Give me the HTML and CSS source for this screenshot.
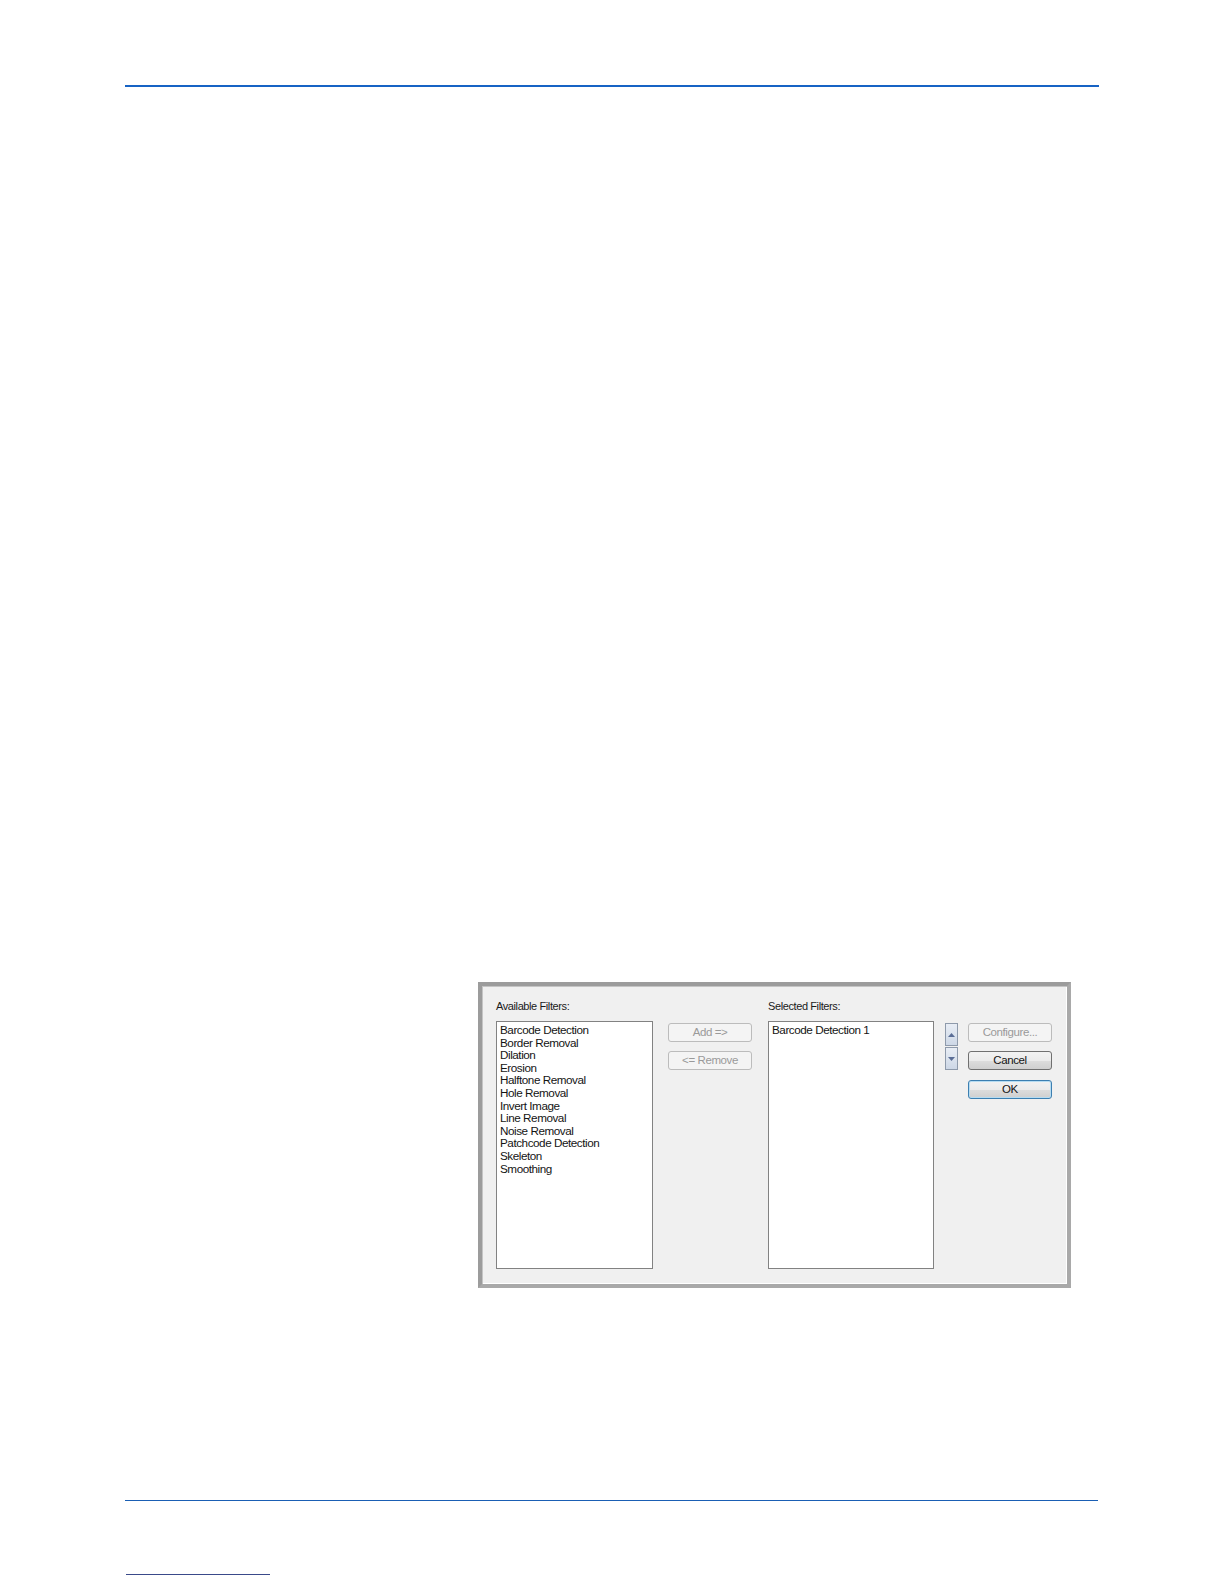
FILE: index.html
```html
<!DOCTYPE html>
<html>
<head>
<meta charset="utf-8">
<link rel="stylesheet" href="styles.css">
</head>
<body>
<div class="page">
  <div class="rule-top"></div>
  <div class="figure">
    <div class="dialog">
      <div class="label lbl-avail">Available Filters:</div>
      <div class="label lbl-sel">Selected Filters:</div>
      <div class="listbox list-avail">
        <div class="item">Barcode Detection</div>
        <div class="item">Border Removal</div>
        <div class="item">Dilation</div>
        <div class="item">Erosion</div>
        <div class="item">Halftone Removal</div>
        <div class="item">Hole Removal</div>
        <div class="item">Invert Image</div>
        <div class="item">Line Removal</div>
        <div class="item">Noise Removal</div>
        <div class="item">Patchcode Detection</div>
        <div class="item">Skeleton</div>
        <div class="item">Smoothing</div>
      </div>
      <div class="btncol mid">
        <div class="btn disabled">Add =&gt;</div>
        <div class="btn disabled">&lt;= Remove</div>
      </div>
      <div class="listbox list-sel">
        <div class="item">Barcode Detection 1</div>
      </div>
      <div class="updown">
        <div class="arrow up"><svg width="7" height="4" viewBox="0 0 7 4"><path d="M0 4 L3.5 0 L7 4 Z" fill="#5a6d96"/></svg></div>
        <div class="arrow down"><svg width="7" height="4" viewBox="0 0 7 4"><path d="M0 0 L3.5 4 L7 0 Z" fill="#5a6d96"/></svg></div>
      </div>
      <div class="btncol right">
        <div class="btn disabled">Configure...</div>
        <div class="btn">Cancel</div>
        <div class="btn default">OK</div>
      </div>
    </div>
  </div>
  <div class="rule-bottom"></div>
  <div class="rule-short"></div>
</div>
</body>
</html>
```
FILE: styles.css
```css
html, body {
  margin: 0;
  padding: 0;
  background: #ffffff;
}
.page {
  padding: 85px 125px 0 125px;
  font-family: "Liberation Sans", Arial, sans-serif;
}
.rule-top {
  height: 2px;
  background: #1763c4;
}
.figure {
  padding: 895px 0 0 353px;
}
.dialog {
  width: 571px;
  height: 285px;
  padding: 13px 0 0 14px;
  border: 4px solid #a9a9a9;
  border-top-color: #9c9c9c;
  border-left-color: #9c9c9c;
  box-shadow: inset 1px 1px 0 #c4c4c4, inset -1px -1px 0 #ffffff;
  background: #f0f0f0;
  display: grid;
  grid-template-columns: 157px 15px 84px 16px 166px 11px 13px 10px 84px;
  grid-template-rows: 22px 248px;
}
.label {
  grid-row: 1;
  font-size: 11px;
  line-height: 14px;
  letter-spacing: -0.4px;
  color: #1a1a1a;
}
.lbl-avail { grid-column: 1; }
.lbl-sel { grid-column: 5; }
.listbox {
  grid-row: 2;
  background: #ffffff;
  border: 1px solid #828282;
  padding: 2px 3px;
  box-sizing: border-box;
  font-size: 11.7px;
  line-height: 12.6px;
  color: #141414;
}
.list-avail { grid-column: 1; }
.list-sel { grid-column: 5; }
.item {
  white-space: nowrap;
  letter-spacing: -0.45px;
}
.btncol {
  grid-row: 2;
  display: flex;
  flex-direction: column;
  padding-top: 2px;
  gap: 9px;
}
.mid { grid-column: 3; }
.right { grid-column: 9; }
.right .default { margin-top: 1px; }
.btn {
  height: 19px;
  box-sizing: border-box;
  border: 1px solid #707070;
  border-radius: 3px;
  background: linear-gradient(#f2f2f2 0%, #ebebeb 50%, #dddddd 51%, #cfcfcf 100%);
  font-size: 11.5px;
  line-height: 17px;
  letter-spacing: -0.4px;
  text-align: center;
  color: #141414;
}
.btn.disabled {
  border-color: #bcbcbc;
  background: #f4f4f4;
  color: #9a9a9a;
}
.btn.default {
  border-color: #3c7fb1;
  box-shadow: inset 0 0 0 1px #b6dcf2;
}
.updown {
  grid-column: 7;
  grid-row: 2;
  display: flex;
  flex-direction: column;
  gap: 1px;
  padding-top: 2px;
}
.arrow {
  height: 23px;
  box-sizing: border-box;
  border: 1px solid #8e9aab;
  background: linear-gradient(#e8edf5 0%, #dbe3ee 50%, #cdd7e6 100%);
  display: flex;
  align-items: center;
  justify-content: center;
}
.rule-bottom {
  margin-top: 212px;
  height: 1px;
  background: #1a5fb4;
  width: 973px;
}
.rule-short {
  margin-top: 73px;
  margin-left: 1px;
  width: 144px;
  height: 1px;
  background: #3a4a8a;
}
```
